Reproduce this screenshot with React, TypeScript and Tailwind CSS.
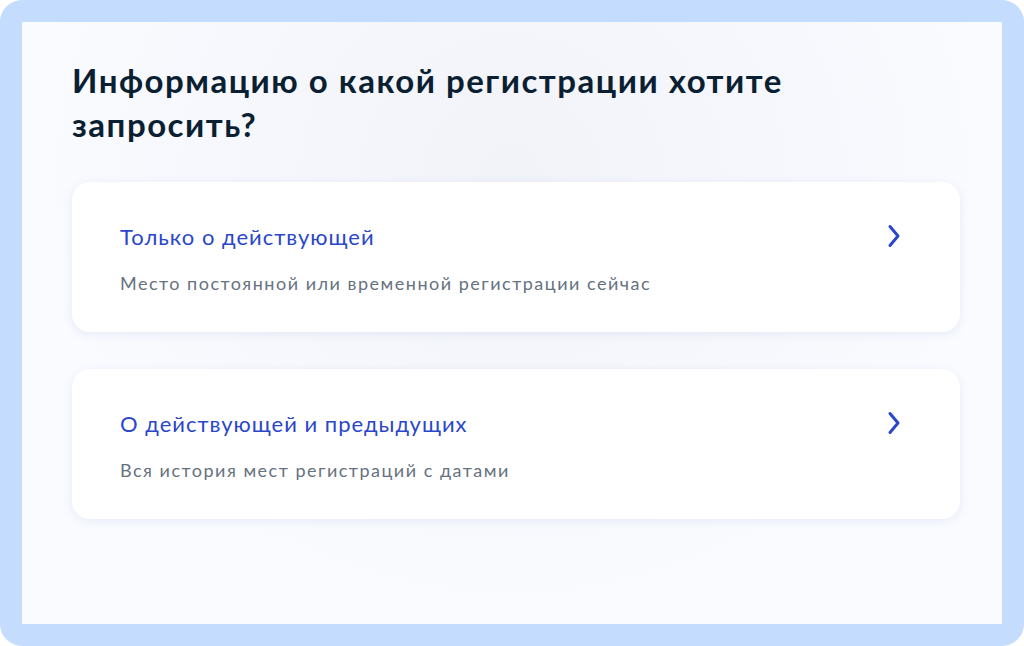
import React from 'react';

const options = [
  { title: 'Только о действующей', subtitle: 'Место постоянной или временной регистрации сейчас' },
  { title: 'О действующей и предыдущих', subtitle: 'Вся история мест регистраций с датами' },
];

const Chevron = () => (
  <svg width="16" height="24" viewBox="0 0 16 24" fill="none" stroke="#2a47c9" strokeWidth="3" strokeLinecap="round" strokeLinejoin="round">
    <path d="M4 2.5l8 9.5-8 9.5" />
  </svg>
);

export default function App() {
  return (
    <div className="w-[1024px] h-[646px] bg-white font-['Lato',sans-serif]">
      <div className="w-full h-full rounded-[22px] bg-[#c4dcfd] p-[22px]">
        <div className="h-full bg-[radial-gradient(ellipse_at_50%_25%,#f1f3f9_0%,#f9fbff_70%)] pl-[50px] pr-[42px] pt-[36px]">
          <h1 className="text-[33px] leading-[44px] font-bold text-[#0b1f33] tracking-[1.5px] max-w-[780px]">
            Информацию о какой регистрации хотите запросить?
          </h1>
          <div className="mt-[36px] flex flex-col gap-[37px]">
            {options.map((o) => (
              <div
                key={o.title}
                className="h-[150px] rounded-[18px] bg-white shadow-[0_2px_10px_rgba(100,120,180,0.12)] pl-[48px] pr-[58px] pt-[39px] flex justify-between"
              >
                <div>
                  <div className="text-[22px] leading-[32px] tracking-[1px] text-[#2a47c9]">{o.title}</div>
                  <div className="mt-[18px] text-[18px] leading-[24px] tracking-[1.5px] text-[#66727f]">{o.subtitle}</div>
                </div>
                <div className="pt-[3px]">
                  <Chevron />
                </div>
              </div>
            ))}
          </div>
        </div>
      </div>
    </div>
  );
}
